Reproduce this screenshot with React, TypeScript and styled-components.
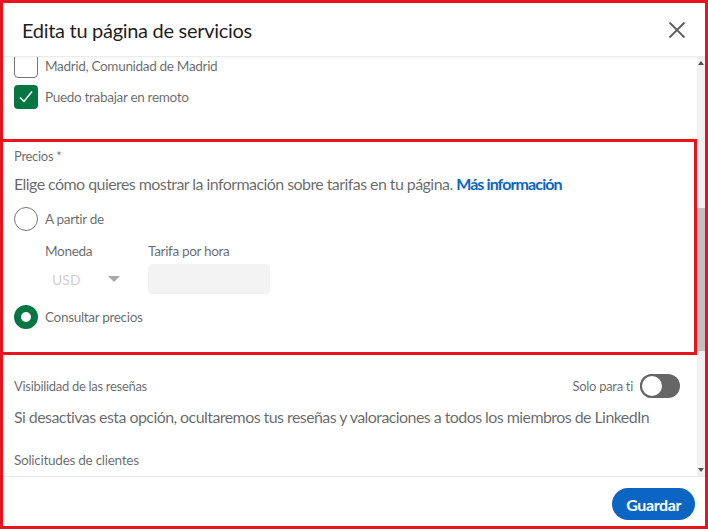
import React from 'react';
import styled, { createGlobalStyle } from 'styled-components';

const GlobalStyle = createGlobalStyle`
  html, body {
    margin: 0;
    padding: 0;
    background: #ffffff;
  }
  * {
    box-sizing: border-box;
  }
`;

const RED = '#e8141c';
const GREEN = '#057642';
const MUTED = 'rgba(0, 0, 0, 0.6)';
const FONT = `Lato, "Noto Sans", sans-serif`;

const Frame = styled.div`
  width: 708px;
  height: 529px;
  border: 3px solid ${RED};
  display: flex;
  flex-direction: column;
  font-family: ${FONT};
  color: ${MUTED};
  overflow: hidden;
`;

const Header = styled.header`
  height: 54px;
  flex: none;
  display: flex;
  align-items: center;
  justify-content: space-between;
  padding: 0 16px 0 19px;
  border-bottom: 1px solid #ebebeb;
  box-shadow: 0 1px 2px rgba(0, 0, 0, 0.04);
  position: relative;
  z-index: 1;
  background: #fff;
`;

const Title = styled.h2`
  margin: 0;
  font-size: 20px;
  font-weight: 400;
  color: rgba(0, 0, 0, 0.9);
  letter-spacing: -0.3px;
`;

const CloseButton = styled.button`
  border: 0;
  background: none;
  padding: 0;
  width: 24px;
  height: 24px;
  display: flex;
  align-items: center;
  justify-content: center;
  color: #5e5e5e;
`;

const ScrollArea = styled.div`
  flex: 1;
  display: flex;
  min-height: 0;
  border-bottom: 1px solid #e8e8e8;
`;

const Content = styled.div`
  flex: 1;
  overflow: hidden;
  display: flex;
  flex-direction: column;
`;

const Section = styled.section`
  padding: 0 17px 0 11px;
  display: flex;
  flex-direction: column;
`;

const TopSection = styled(Section)`
  margin-top: -3px;
`;

const Highlight = styled.section`
  margin-top: 30px;
  border: 3px solid ${RED};
  border-left-width: 0;
  padding: 5px 14px 23px 11px;
  display: flex;
  flex-direction: column;
`;

const OptionRow = styled.label<{ gap?: number }>`
  display: flex;
  align-items: center;
  gap: 7px;
  height: 24px;
  margin-top: ${({ gap }) => gap ?? 0}px;
  font-size: 13.6px;
  letter-spacing: -0.35px;
  color: ${MUTED};
`;

const Checkbox = styled.span<{ checked?: boolean }>`
  width: 24px;
  height: 24px;
  flex: none;
  border-radius: 4px;
  border: ${({ checked }) => (checked ? 'none' : '1.5px solid #757575')};
  background: ${({ checked }) => (checked ? GREEN : '#fff')};
  display: flex;
  align-items: center;
  justify-content: center;
`;

const Radio = styled.span<{ checked?: boolean }>`
  width: 24px;
  height: 24px;
  flex: none;
  border-radius: 50%;
  border: ${({ checked }) => (checked ? `7px solid ${GREEN}` : '1.5px solid #757575')};
  background: #fff;
`;

const SmallLabel = styled.div<{ size?: number; top?: number }>`
  font-size: ${({ size }) => size ?? 13}px;
  margin-top: ${({ top }) => top ?? 0}px;
  letter-spacing: -0.3px;
  color: ${MUTED};
  line-height: 18px;
`;

const Lead = styled.p<{ top?: number }>`
  margin: ${({ top }) => top ?? 0}px 0 0;
  font-size: 16px;
  line-height: 22px;
  letter-spacing: -0.57px;
  color: ${MUTED};
`;

const Link = styled.a`
  color: #0a66c2;
  font-weight: 700;
  letter-spacing: -0.9px;
  text-decoration: none;
`;

const PriceFields = styled.div`
  display: flex;
  gap: 26px;
  padding-left: 31px;
  margin-top: 11px;
`;

const Field = styled.div`
  display: flex;
  flex-direction: column;
  gap: 4px;
`;

const FieldLabel = styled.span`
  font-size: 13.6px;
  letter-spacing: -0.35px;
  line-height: 18px;
  color: ${MUTED};
`;

const SelectBox = styled.div`
  width: 77px;
  height: 30px;
  display: flex;
  align-items: center;
  justify-content: space-between;
  padding: 0 2px 0 7px;
  font-size: 14px;
  color: #d0d0d0;
`;

const Caret = styled.span`
  width: 0;
  height: 0;
  border-left: 6px solid transparent;
  border-right: 6px solid transparent;
  border-top: 6px solid #a8a8a8;
`;

const RateInput = styled.div`
  width: 122px;
  height: 30px;
  border-radius: 4px;
  background: #f3f3f3;
`;

const SplitRow = styled.div`
  display: flex;
  align-items: center;
  justify-content: space-between;
  margin-top: 19px;
`;

const ToggleWrap = styled.div`
  display: flex;
  align-items: center;
  gap: 7px;
`;

const Toggle = styled.span`
  width: 40px;
  height: 24px;
  border-radius: 12px;
  background: #666666;
  display: flex;
  align-items: center;
`;

const Knob = styled.span`
  width: 24px;
  height: 24px;
  border-radius: 50%;
  background: #fff;
  border: 2px solid #666666;
`;

const Scrollbar = styled.div`
  width: 8px;
  flex: none;
  background: #f1f1f1;
  display: flex;
  flex-direction: column;
  align-items: center;
  padding: 4px 0;
`;

const Arrow = styled.span<{ down?: boolean }>`
  width: 0;
  height: 0;
  border-left: 3px solid transparent;
  border-right: 3px solid transparent;
  ${({ down }) => (down ? 'border-top: 4px solid #505050;' : 'border-bottom: 4px solid #505050;')}
`;

const Thumb = styled.div`
  width: 100%;
  height: 143px;
  background: #c1c1c1;
  margin-top: 143px;
`;

const Spacer = styled.div`
  flex: 1;
`;

const Footer = styled.footer`
  height: 49px;
  flex: none;
  display: flex;
  align-items: flex-start;
  justify-content: flex-end;
  padding: 11px 10px 0;
`;

const SaveButton = styled.button`
  height: 32px;
  padding: 0 14px;
  border: 0;
  border-radius: 16px;
  background: #0a66c2;
  color: #fff;
  font-family: ${FONT};
  font-size: 16px;
  font-weight: 700;
  letter-spacing: -0.4px;
`;

export default function App() {
  return (
    <>
      <GlobalStyle />
      <Frame>
        <Header>
          <Title>Edita tu página de servicios</Title>
          <CloseButton aria-label="Cerrar">
            <svg width="18" height="18" viewBox="0 0 18 18" fill="none" stroke="currentColor" strokeWidth="1.8">
              <path d="M1.5 1.5 L16.5 16.5 M16.5 1.5 L1.5 16.5" />
            </svg>
          </CloseButton>
        </Header>
        <ScrollArea>
          <Content>
            <TopSection>
              <OptionRow>
                <Checkbox />
                Madrid, Comunidad de Madrid
              </OptionRow>
              <OptionRow gap={7}>
                <Checkbox checked>
                  <svg width="18" height="18" viewBox="0 0 18 18" fill="none" stroke="#fff" strokeWidth="1.5">
                    <path d="M3 9.5 L7 13.5 L15 3.5" />
                  </svg>
                </Checkbox>
                Puedo trabajar en remoto
              </OptionRow>
            </TopSection>
            <Highlight>
              <SmallLabel>Precios *</SmallLabel>
              <Lead top={8}>
                Elige cómo quieres mostrar la información sobre tarifas en tu página. <Link>Más información</Link>
              </Lead>
              <OptionRow gap={12}>
                <Radio />
                A partir de
              </OptionRow>
              <PriceFields>
                <Field>
                  <FieldLabel>Moneda</FieldLabel>
                  <SelectBox>
                    USD
                    <Caret />
                  </SelectBox>
                </Field>
                <Field>
                  <FieldLabel>Tarifa por hora</FieldLabel>
                  <RateInput />
                </Field>
              </PriceFields>
              <OptionRow gap={11}>
                <Radio checked />
                Consultar precios
              </OptionRow>
            </Highlight>
            <Section>
              <SplitRow>
                <SmallLabel>Visibilidad de las reseñas</SmallLabel>
                <ToggleWrap>
                  <SmallLabel>Solo para ti</SmallLabel>
                  <Toggle>
                    <Knob />
                  </Toggle>
                </ToggleWrap>
              </SplitRow>
              <Lead top={8}>
                Si desactivas esta opción, ocultaremos tus reseñas y valoraciones a todos los miembros de LinkedIn
              </Lead>
              <SmallLabel size={13.6} top={23}>
                Solicitudes de clientes
              </SmallLabel>
            </Section>
          </Content>
          <Scrollbar>
            <Arrow />
            <Thumb />
            <Spacer />
            <Arrow down />
          </Scrollbar>
        </ScrollArea>
        <Footer>
          <SaveButton>Guardar</SaveButton>
        </Footer>
      </Frame>
    </>
  );
}
